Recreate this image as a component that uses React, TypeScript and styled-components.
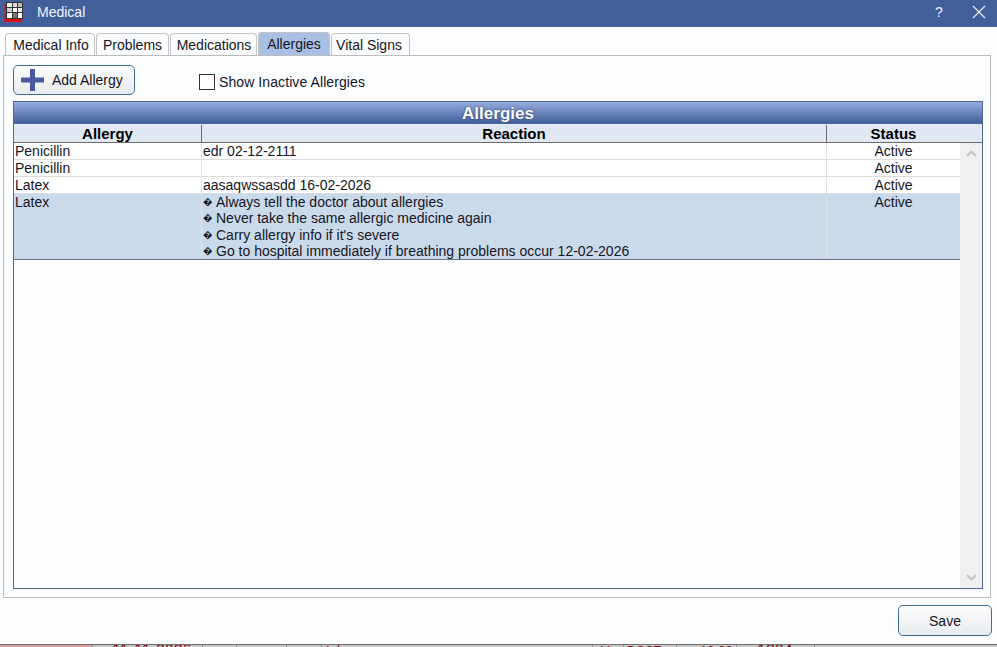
import styled, { createGlobalStyle } from 'styled-components';

const GlobalStyle = createGlobalStyle`
  html, body {
    margin: 0;
    padding: 0;
    background: #fcfdff;
  }
  * {
    box-sizing: border-box;
  }
`;

const FONT = `"Liberation Sans", Arial, sans-serif`;
const COLUMNS = '188px 625px 133px';

const Window = styled.div`
  width: 997px;
  height: 647px;
  display: flex;
  flex-direction: column;
  overflow: hidden;
  background: #fcfdff;
  font-family: ${FONT};
  font-size: 14px;
  color: #111;
`;

const TitleBar = styled.div`
  height: 27px;
  flex: none;
  display: flex;
  align-items: center;
  padding: 0 10px 3px 3px;
  background: #435f9a;
  color: #f0f4fb;
`;

const Title = styled.span`
  margin-left: 12px;
  flex: 1;
`;

const TitleButton = styled.button<{ $gap: number }>`
  border: 0;
  padding: 0;
  background: none;
  color: #f0f4fb;
  font: 14px ${FONT};
  display: flex;
  align-items: center;
  justify-content: center;
  width: 16px;
  height: 16px;
  margin-left: ${({ $gap }) => $gap}px;
`;

const Content = styled.div`
  flex: 1;
  display: flex;
  flex-direction: column;
  padding: 6px 6px 0 3px;
`;

const TabStrip = styled.div`
  display: flex;
  gap: 1px;
  height: 22px;
  padding-left: 2px;
  flex: none;
`;

const Tab = styled.div<{ $active?: boolean; $w: number; $left: number; $right: number }>`
  width: ${({ $w }) => $w}px;
  display: flex;
  align-items: center;
  justify-content: center;
  border: 1px solid #c4c4c4;
  border-bottom: 0;
  border-radius: 4px 4px 0 0;
  background: ${({ $active }) => ($active ? '#aabfe4' : '#fcfdff')};
  color: #15151f;
  padding: 1px ${({ $right }) => $right}px 0 ${({ $left }) => $left}px;
  ${({ $active }) => $active && 'margin-top: -1px; height: 23px; padding-top: 0;'}
`;

const Panel = styled.div`
  width: 988px;
  height: 543px;
  flex: none;
  border: 1px solid #bcbcbc;
  padding: 9px 7px 8px 9px;
  display: flex;
  flex-direction: column;
`;

const Toolbar = styled.div`
  height: 36px;
  flex: none;
  display: flex;
  align-items: flex-start;
`;

const ActionButton = styled.button<{ $w: number }>`
  width: ${({ $w }) => $w}px;
  border: 1px solid #3f6c94;
  border-radius: 5px;
  background: linear-gradient(#fdfdfe, #e7ebee);
  font: 14px ${FONT};
  color: #15151f;
  display: flex;
  align-items: center;
  justify-content: center;
  padding: 0;
`;

const AddButton = styled(ActionButton)`
  height: 30px;
  justify-content: flex-start;
  padding-left: 7px;
  gap: 8px;
`;

const ShowInactive = styled.label`
  display: flex;
  align-items: center;
  gap: 4px;
  margin: 9px 0 0 64px;
  color: #15151f;
  letter-spacing: 0.09px;
`;

const CheckBox = styled.span`
  width: 16px;
  height: 16px;
  border: 1px solid #333;
  background: #fff;
`;

const Grid = styled.div`
  flex: 1;
  display: flex;
  flex-direction: column;
  border: 1px solid #4f6a98;
  min-height: 0;
`;

const GridTitle = styled.div`
  height: 22px;
  flex: none;
  display: flex;
  align-items: center;
  justify-content: center;
  padding-top: 2px;
  background: linear-gradient(#95abdd, #435f9a);
  color: #fff;
  font-weight: 700;
  font-size: 17px;
  text-shadow: 0 0 2px #20345f;
  border-bottom: 1px solid #4f6a98;
`;

const HeaderRow = styled.div`
  height: 19px;
  flex: none;
  display: grid;
  grid-template-columns: ${COLUMNS};
  background: #e0e9f3;
  border-bottom: 1px solid #6b6b6b;
`;

const HeaderCell = styled.div<{ $last?: boolean }>`
  display: flex;
  align-items: center;
  justify-content: center;
  font-weight: 700;
  font-size: 15px;
  color: #000;
  margin-top: 1px;
  height: 17px;
  border-right: ${({ $last }) => ($last ? '0' : '1px solid #6b6b6b')};
`;

const GridBody = styled.div`
  flex: 1;
  display: flex;
  min-height: 0;
`;

const Rows = styled.div`
  flex: 1;
  background: #fcfdff;
`;

const Row = styled.div<{ $selected?: boolean }>`
  display: grid;
  grid-template-columns: ${COLUMNS};
  min-height: 17px;
  line-height: 16px;
  border-bottom: 1px solid ${({ $selected }) => ($selected ? '#5f7494' : '#dcdcdc')};
  background: ${({ $selected }) => ($selected ? '#cbdaea' : '#fff')};
  color: #15151f;
`;

const Cell = styled.div<{ $center?: boolean; $last?: boolean }>`
  padding: 0 1px;
  text-align: ${({ $center }) => ($center ? 'center' : 'left')};
  border-right: ${({ $last }) => ($last ? '0' : '1px solid #e3e3e3')};
`;

const ReactionLine = styled.div`
  display: flex;
  line-height: 16.25px;
`;

const Bullet = styled.span`
  width: 13px;
  flex: none;
  font-size: 9.500px;
  overflow: hidden;
`;

const ScrollTrack = styled.div`
  width: 22px;
  flex: none;
  background: #f0f0f0;
  display: flex;
  flex-direction: column;
  justify-content: space-between;
  align-items: center;
  padding: 7px 0;
`;

const Footer = styled.div`
  flex: 1;
  display: flex;
  justify-content: flex-end;
  align-items: flex-start;
  padding-top: 7px;
`;

const SaveButton = styled(ActionButton)`
  height: 31px;
  margin-right: -1px;
`;

const BackStrip = styled.div`
  height: 3px;
  flex: none;
  display: flex;
  background: #c8c8c8;
  border-top: 1px solid #6e6e6e;
  overflow: hidden;
`;

const BackCell = styled.div<{ $w: number; $pink?: boolean; $pad?: number; $size?: number }>`
  width: ${({ $w }) => $w}px;
  flex: none;
  font-size: ${({ $size }) => $size ?? 14}px;
  line-height: 12px;
  height: 12px;
  white-space: nowrap;
  color: #7a0f0f;
  padding-left: ${({ $pad }) => $pad ?? 0}px;
  background: ${({ $pink }) => ($pink ? '#df9a9a' : 'transparent')};
  border-right: 1px solid #8a8a8a;
`;

const AppIcon = () => (
  <svg width="22" height="22" viewBox="0 0 22 22">
    <rect x="1.500" y="3" width="17" height="18" fill="#e01010" />
    <rect x="3" y="1" width="17" height="17" fill="#333" />
    <rect x="4" y="2" width="5" height="4" fill="#eee" />
    <rect x="10" y="2" width="4" height="4" fill="#ddd" />
    <rect x="15" y="2" width="4" height="4" fill="#bbb" />
    <rect x="4" y="7" width="5" height="4" fill="#ccc" />
    <rect x="10" y="7" width="4" height="4" fill="#fff" />
    <rect x="15" y="7" width="4" height="4" fill="#eee" />
    <rect x="4" y="12" width="5" height="5" fill="#fff" />
    <rect x="10" y="12" width="4" height="5" fill="#777" />
    <rect x="15" y="12" width="4" height="5" fill="#fff" />
  </svg>
);

const CloseIcon = () => (
  <svg width="14" height="14" viewBox="0 0 14 14">
    <path d="M1 1 L13 13 M13 1 L1 13" stroke="#f0f4fb" strokeWidth="1.100" fill="none" />
  </svg>
);

const PlusIcon = () => (
  <svg width="23" height="22" viewBox="0 0 23 22">
    <path d="M9 0h5v8.500h9v5h-9V22H9v-8.500H0v-5h9z" fill="#4a5a9e" />
  </svg>
);

const Chevron = ({ up }: { up?: boolean }) => (
  <svg width="11" height="7" viewBox="0 0 11 7">
    <path d={up ? 'M1 6 L5.500 1.500 L10 6' : 'M1 1 L5.500 5.500 L10 1'} stroke="#c4c4c4" strokeWidth="2" fill="none" />
  </svg>
);

const TABS = [
  { label: 'Medical Info', w: 90, left: 2, right: 0 },
  { label: 'Problems', w: 73, left: 0, right: 0 },
  { label: 'Medications', w: 87, left: 1, right: 0 },
  { label: 'Allergies', w: 72, left: 0, right: 0, active: true },
  { label: 'Vital Signs', w: 79, left: 0, right: 3 },
];

const ALLERGIES = [
  { name: 'Penicillin', reaction: 'edr 02-12-2111' },
  { name: 'Penicillin', reaction: '' },
  { name: 'Latex', reaction: 'aasaqwssasdd 16-02-2026' },
];

const LATEX_NOTES = [
  'Always tell the doctor about allergies',
  'Never take the same allergic medicine again',
  "Carry allergy info if it's severe",
  'Go to hospital immediately if breathing problems occur 12-02-2026',
];

const BACK_CELLS = [
  { w: 93, pink: true, text: '' },
  { w: 110, pad: 19, size: 16, text: '11-11-2026' },
  { w: 34, text: '' },
  { w: 50, text: '' },
  { w: 35, text: '' },
  { w: 271, pad: 1, text: 'Adenge' },
  { w: 31, pad: 5, text: '11' },
  { w: 53, pad: 3, size: 12, text: 'DOCT' },
  { w: 60, pad: 23, size: 13, text: '10:00' },
  { w: 78, pad: 20, size: 16, text: '1204' },
];

export default function App() {
  return (
    <Window>
      <GlobalStyle />
      <TitleBar>
        <AppIcon />
        <Title>Medical</Title>
        <TitleButton $gap={0}>?</TitleButton>
        <TitleButton $gap={24}>
          <CloseIcon />
        </TitleButton>
      </TitleBar>
      <Content>
        <TabStrip>
          {TABS.map((tab) => (
            <Tab key={tab.label} $w={tab.w} $active={tab.active} $left={tab.left} $right={tab.right}>
              {tab.label}
            </Tab>
          ))}
        </TabStrip>
        <Panel>
          <Toolbar>
            <AddButton $w={122}>
              <PlusIcon />
              Add Allergy
            </AddButton>
            <ShowInactive>
              <CheckBox />
              Show Inactive Allergies
            </ShowInactive>
          </Toolbar>
          <Grid>
            <GridTitle>Allergies</GridTitle>
            <HeaderRow>
              <HeaderCell>Allergy</HeaderCell>
              <HeaderCell>Reaction</HeaderCell>
              <HeaderCell $last>Status</HeaderCell>
            </HeaderRow>
            <GridBody>
              <Rows>
                {ALLERGIES.map((item, i) => (
                  <Row key={i}>
                    <Cell>{item.name}</Cell>
                    <Cell>{item.reaction}</Cell>
                    <Cell $center $last>Active</Cell>
                  </Row>
                ))}
                <Row $selected>
                  <Cell>Latex</Cell>
                  <Cell>
                    {LATEX_NOTES.map((note) => (
                      <ReactionLine key={note}>
                        <Bullet>{'\uFFFD'}</Bullet>
                        {note}
                      </ReactionLine>
                    ))}
                  </Cell>
                  <Cell $center $last>Active</Cell>
                </Row>
              </Rows>
              <ScrollTrack>
                <Chevron up />
                <Chevron />
              </ScrollTrack>
            </GridBody>
          </Grid>
        </Panel>
        <Footer>
          <SaveButton $w={94}>Save</SaveButton>
        </Footer>
      </Content>
      <BackStrip>
        {BACK_CELLS.map((cell, i) => (
          <BackCell key={i} $w={cell.w} $pink={cell.pink} $pad={cell.pad} $size={cell.size}>
            {cell.text}
          </BackCell>
        ))}
      </BackStrip>
    </Window>
  );
}
